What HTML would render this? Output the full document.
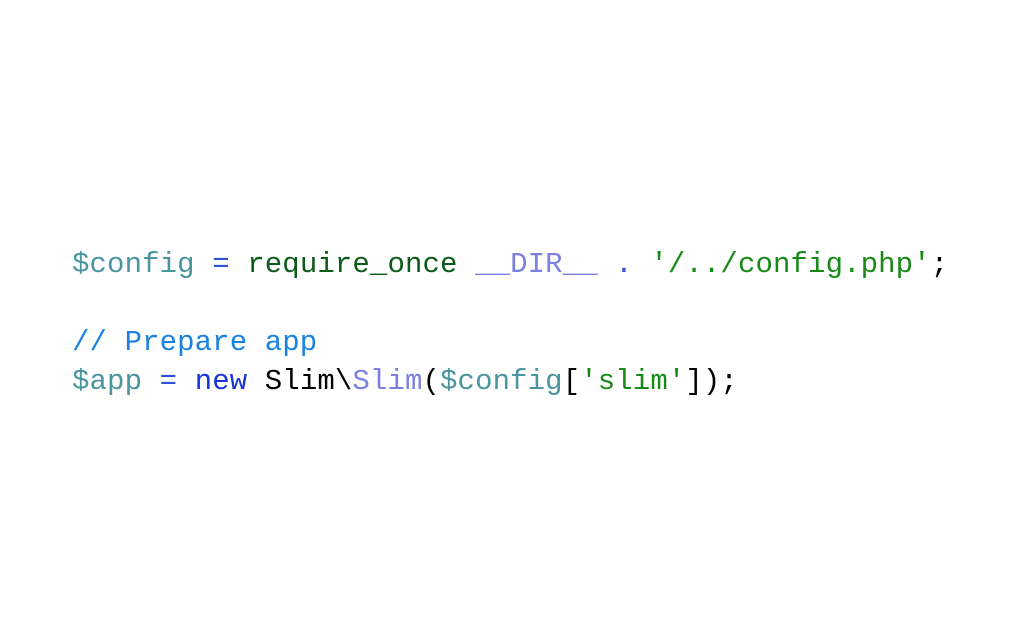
<!DOCTYPE html>
<html><head><style>
html,body{margin:0;padding:0;background:#fff;width:1024px;height:641px;overflow:hidden}
pre{position:absolute;left:72px;top:245px;margin:0;font-family:"Liberation Mono",monospace;font-size:29px;letter-spacing:0.12px;line-height:39px;color:#000}
.v{color:#4a959e}.o{color:#2f52d6}.k{color:#0b5a17}.c{color:#7b80e0}.s{color:#188a18}.m{color:#1a82e2}.n{color:#1833d8}
</style></head><body>
<pre><span class="v">$config</span> <span class="o">=</span> <span class="k">require_once</span> <span class="c">__DIR__</span> <span class="o">.</span> <span class="s">'/../config.php'</span>;

<span class="m">// Prepare app</span>
<span class="v">$app</span> <span class="o">=</span> <span class="n">new</span> Slim\<span class="c">Slim</span>(<span class="v">$config</span>[<span class="s">'slim'</span>]);</pre>
</body></html>
